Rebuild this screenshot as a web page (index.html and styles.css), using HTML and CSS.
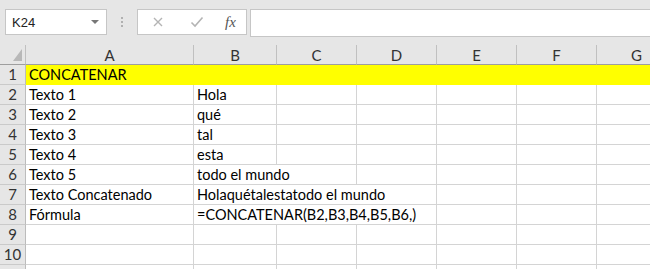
FILE: index.html
```html
<!DOCTYPE html>
<html lang="es">
<head>
    <meta charset="UTF-8">
    <meta name="viewport" content="width=device-width, initial-scale=1.0">
    <title>CONCATENAR</title>
    <link rel="stylesheet" href="styles.css">
</head>
<body>

    <div class="toolbar">
        <div class="name-box">
            <span class="name-value">K24</span>
            <span class="caret"></span>
        </div>
        <div class="grip"><i></i><i></i><i></i></div>
        <div class="fx-buttons">
            <svg class="btn-icon" width="12" height="12" viewBox="0 0 12 12">
                <path d="M2 2 L10 10 M10 2 L2 10" stroke="#b4b4b4" stroke-width="1.4" fill="none"/>
            </svg>
            <svg class="btn-icon" width="14" height="12" viewBox="0 0 14 12">
                <path d="M1.5 6.5 L5 10 L12.5 1.5" stroke="#b4b4b4" stroke-width="1.6" fill="none"/>
            </svg>
            <span class="fx">fx</span>
        </div>
        <div class="formula-bar"></div>
    </div>

    <div class="sheet">
        <div class="row head">
            <div class="corner"><span class="corner-mark"></span></div>
            <div class="col-head">A</div>
            <div class="col-head">B</div>
            <div class="col-head">C</div>
            <div class="col-head">D</div>
            <div class="col-head">E</div>
            <div class="col-head">F</div>
            <div class="col-head">G</div>
        </div>
        <div class="row">
            <div class="row-head">1</div>
            <div class="cell fill span-7">CONCATENAR</div>
        </div>
        <div class="row">
            <div class="row-head">2</div>
            <div class="cell">Texto 1</div>
            <div class="cell">Hola</div>
            <div class="cell"></div><div class="cell"></div><div class="cell"></div><div class="cell"></div><div class="cell"></div>
        </div>
        <div class="row">
            <div class="row-head">3</div>
            <div class="cell">Texto 2</div>
            <div class="cell">qué</div>
            <div class="cell"></div><div class="cell"></div><div class="cell"></div><div class="cell"></div><div class="cell"></div>
        </div>
        <div class="row">
            <div class="row-head">4</div>
            <div class="cell">Texto 3</div>
            <div class="cell">tal</div>
            <div class="cell"></div><div class="cell"></div><div class="cell"></div><div class="cell"></div><div class="cell"></div>
        </div>
        <div class="row">
            <div class="row-head">5</div>
            <div class="cell">Texto 4</div>
            <div class="cell">esta</div>
            <div class="cell"></div><div class="cell"></div><div class="cell"></div><div class="cell"></div><div class="cell"></div>
        </div>
        <div class="row">
            <div class="row-head">6</div>
            <div class="cell">Texto 5</div>
            <div class="cell span-2">todo el mundo</div>
            <div class="cell"></div><div class="cell"></div><div class="cell"></div><div class="cell"></div>
        </div>
        <div class="row">
            <div class="row-head">7</div>
            <div class="cell">Texto Concatenado</div>
            <div class="cell span-3">Holaquétalestatodo el mundo</div>
            <div class="cell"></div><div class="cell"></div><div class="cell"></div>
        </div>
        <div class="row">
            <div class="row-head">8</div>
            <div class="cell">Fórmula</div>
            <div class="cell span-3">=CONCATENAR(B2,B3,B4,B5,B6,)</div>
            <div class="cell"></div><div class="cell"></div><div class="cell"></div>
        </div>
        <div class="row">
            <div class="row-head">9</div>
            <div class="cell"></div><div class="cell"></div><div class="cell"></div><div class="cell"></div><div class="cell"></div><div class="cell"></div><div class="cell"></div>
        </div>
        <div class="row">
            <div class="row-head">10</div>
            <div class="cell"></div><div class="cell"></div><div class="cell"></div><div class="cell"></div><div class="cell"></div><div class="cell"></div><div class="cell"></div>
        </div>
        <div class="row">
            <div class="row-head"></div>
            <div class="cell"></div><div class="cell"></div><div class="cell"></div><div class="cell"></div><div class="cell"></div><div class="cell"></div><div class="cell"></div>
        </div>
    </div>

</body>
</html>
```

FILE: styles.css
```css
body {
    margin: 0;
    width: 650px;
    height: 269px;
    overflow: hidden;
    background: #ffffff;
    font-family: Lato, "Liberation Sans", sans-serif;
    color: #000000;
}

/* formula bar area */
.toolbar {
    display: flex;
    align-items: flex-start;
    height: 45px;
    padding: 9px 0 0 5px;
    box-sizing: border-box;
    background: #e6e6e6;
}
.name-box {
    display: flex;
    align-items: center;
    justify-content: space-between;
    width: 102px;
    height: 26px;
    padding: 0 7px 0 6px;
    box-sizing: border-box;
    background: #ffffff;
    border: 1px solid #c6c6c6;
    font-family: "Liberation Sans", sans-serif;
    font-size: 13px;
    color: #222222;
}
.caret {
    width: 0;
    height: 0;
    border-left: 4px solid transparent;
    border-right: 4px solid transparent;
    border-top: 4px solid #777777;
}
.grip {
    display: flex;
    flex-direction: column;
    gap: 2px;
    margin: 8px 14px 0 14px;
}
.grip i {
    width: 2px;
    height: 2px;
    background: #b0b0b0;
}
.fx-buttons {
    display: flex;
    align-items: center;
    width: 110px;
    height: 26px;
    padding: 0 0 0 14px;
    box-sizing: border-box;
    background: #ffffff;
    border: 1px solid #c6c6c6;
}
.btn-icon {
    margin-right: 26px;
}
.btn-icon + .btn-icon {
    margin-right: 21px;
}
.fx {
    font-family: "Liberation Serif", serif;
    font-style: italic;
    font-size: 15px;
    color: #555555;
}
.formula-bar {
    flex: 1;
    height: 26px;
    margin-left: 3px;
    background: #ffffff;
    border: 1px solid #c6c6c6;
    border-right: none;
}

/* grid */
.sheet {
    height: 224px;
    overflow: hidden;
}
.row {
    display: grid;
    grid-template-columns: 26px 168px 83px 80px 80px 80px 80px 80px;
    height: 20px;
}
.row.head {
    height: 20px;
    background: #e6e6e6;
}
.corner, .col-head {
    position: relative;
    border-bottom: 1px solid #9e9e9e;
    border-right: 1px solid #c0c0c0;
}
.col-head {
    display: flex;
    align-items: center;
    justify-content: center;
    font-size: 15px;
    color: #333333;
}
.corner-mark {
    position: absolute;
    right: 3px;
    bottom: 3px;
    width: 0;
    height: 0;
    border-left: 9px solid transparent;
    border-bottom: 12px solid #b8b8b8;
}
.row-head {
    display: flex;
    align-items: flex-end;
    justify-content: center;
    background: #e6e6e6;
    border-right: 1px solid #bcbcbc;
    border-bottom: 1px solid #cacaca;
    font-size: 15px;
    line-height: 19px;
    color: #333333;
}
.cell {
    display: flex;
    align-items: flex-end;
    padding: 0 3px;
    border-right: 1px solid #d4d4d4;
    border-bottom: 1px solid #d4d4d4;
    white-space: nowrap;
    font-size: 14.5px;
    line-height: 19px;
}
.fill {
    background: #ffff00;
    border-color: #ffff00;
}
.span-2 { grid-column: span 2; }
.span-3 { grid-column: span 3; }
.span-7 { grid-column: span 7; }
```
